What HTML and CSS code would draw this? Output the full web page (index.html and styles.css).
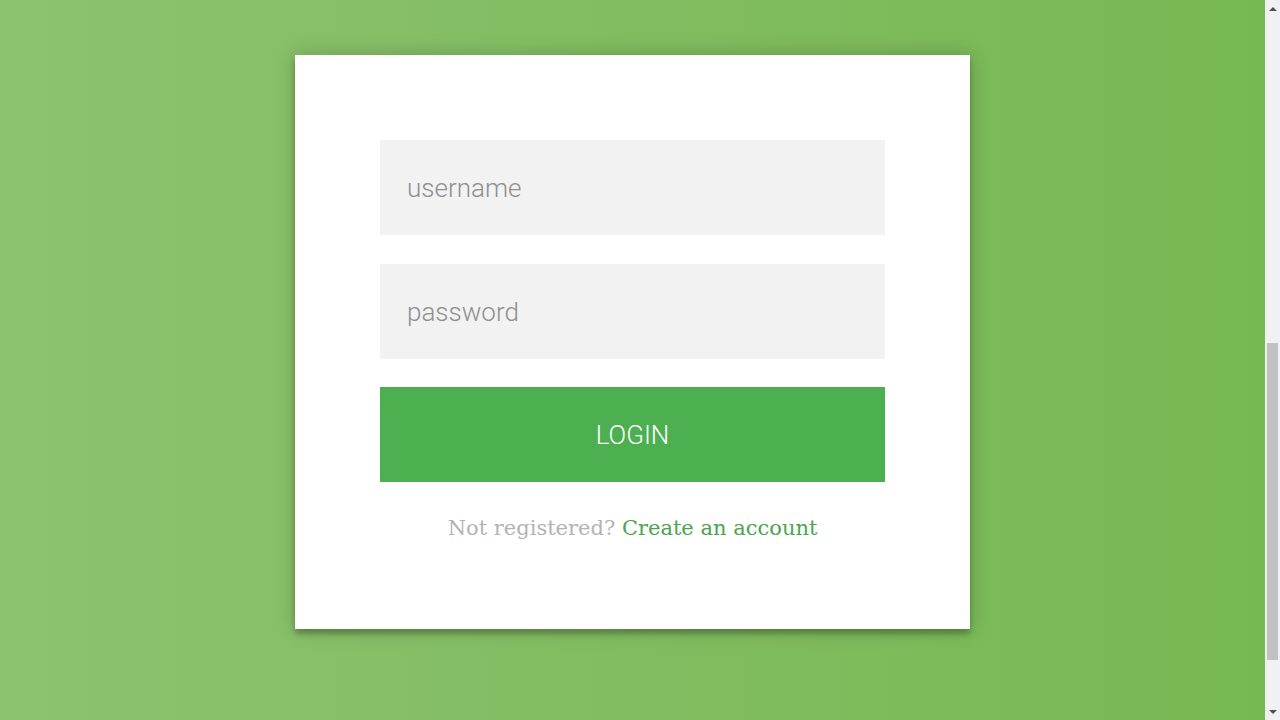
FILE: index.html
```html
<!DOCTYPE html>
<html lang="en">
<head>
    <meta charset="UTF-8">
    <meta name="viewport" content="width=device-width, initial-scale=1.0">
    <title>Login</title>
    <link rel="stylesheet" href="styles.css">
</head>
<body>
    <div class="page">
        <div class="login-page">
            <form class="form">
                <input type="text" placeholder="username">
                <input type="password" placeholder="password">
                <button type="button">login</button>
                <p class="message">Not registered? <a href="#">Create an account</a></p>
            </form>
        </div>
    </div>

    <div class="scrollbar">
        <div class="arrow arrow-up"></div>
        <div class="track">
            <div class="thumb"></div>
        </div>
        <div class="arrow arrow-down"></div>
    </div>
</body>
</html>
```

FILE: styles.css
```css
html, body {
    height: 100%;
}

body {
    margin: 0;
    display: flex;
    overflow: hidden;
    font-family: Roboto, sans-serif;
}

.page {
    flex: 1;
    background: linear-gradient(to left, #76b852, #8dc26f);
}

.login-page {
    display: flex;
    justify-content: center;
    padding-top: 55px;
}

.form {
    width: 505px;
    padding: 85px 85px 0;
    height: 489px;
    background: #ffffff;
    box-shadow: 0 0 20px 0 rgba(0, 0, 0, 0.2), 0 5px 5px 0 rgba(0, 0, 0, 0.24);
    display: flex;
    flex-direction: column;
}

.form input {
    font-family: Roboto, sans-serif;
    font-weight: 300;
    outline: 0;
    background: #f2f2f2;
    width: 100%;
    height: 95px;
    border: 0;
    margin: 0 0 29px;
    padding: 0 27px;
    box-sizing: border-box;
    font-size: 26px;
    color: #555;
}

.form input:nth-of-type(2) {
    margin-bottom: 28px;
}

.form input::placeholder {
    color: #8f8f8f;
}

.form button {
    font-family: Roboto, sans-serif;
    font-weight: 300;
    text-transform: uppercase;
    outline: 0;
    background: #4caf50;
    width: 100%;
    height: 95px;
    border: 0;
    padding: 0;
    color: #ffffff;
    font-size: 26px;
    cursor: pointer;
}

.form .message {
    margin: 34px 0 0;
    color: #b3b3b3;
    font-family: "DejaVu Serif", serif;
    font-size: 21px;
    text-align: center;
}

.form .message a {
    color: #4aa54e;
    text-decoration: none;
}

/* fake browser scrollbar */
.scrollbar {
    width: 15px;
    background: #f1f1f1;
    display: flex;
    flex-direction: column;
}

.arrow {
    height: 17px;
    display: flex;
    align-items: center;
    justify-content: center;
}

.arrow::before {
    content: "";
    border-left: 4px solid transparent;
    border-right: 4px solid transparent;
}

.arrow-up::before {
    border-bottom: 4px solid #505050;
}

.arrow-down::before {
    border-top: 4px solid #505050;
}

.track {
    flex: 1;
    display: flex;
    flex-direction: column;
    padding-top: 326px;
    padding-bottom: 43px;
}

.thumb {
    flex: 1;
    margin: 0 2px;
    background: #c1c1c1;
}
```
